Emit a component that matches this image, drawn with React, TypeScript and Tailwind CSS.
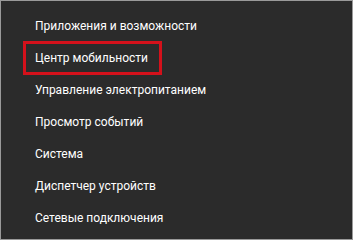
import React from "react";

const items = [
  "Приложения и возможности",
  "Центр мобильности",
  "Управление электропитанием",
  "Просмотр событий",
  "Система",
  "Диспетчер устройств",
  "Сетевые подключения",
];

export default function App() {
  return (
    <div
      className="w-[353px] h-[240px] bg-[#2b2b2b] border border-[#9a9a9a] overflow-hidden"
      style={{ fontFamily: 'Roboto, "Noto Sans", sans-serif' }}
    >
      <ul className="pt-[9px] flex flex-col">
        {items.map((t, i) => (
          <li key={t} className="relative h-[32px] flex items-center pl-[34px] text-[12px] text-white">
            {i === 1 && (
              <span className="absolute left-[22px] top-[-1px] w-[139px] h-[34px] border-[3px] border-[#d4111b]" />
            )}
            <span className="relative">{t}</span>
          </li>
        ))}
      </ul>
    </div>
  );
}
